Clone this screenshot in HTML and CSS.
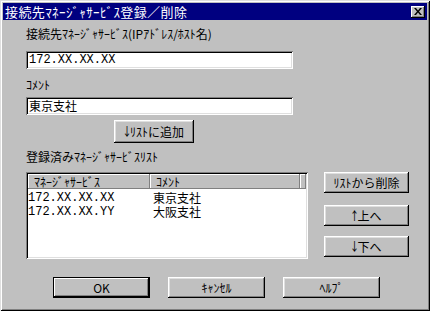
FILE: index.html
```html
<!DOCTYPE html>
<html lang="ja">
<head>
    <meta charset="UTF-8">
    <title>接続先ﾏﾈｰｼﾞｬｻｰﾋﾞｽ登録／削除</title>
    <link rel="stylesheet" href="styles.css">
</head>
<body>
    <div class="dialog">
        <div class="titlebar">
            <span class="title">接続先ﾏﾈｰｼﾞｬｻｰﾋﾞｽ登録／削除</span>
            <span class="close-btn">
                <svg width="8" height="7" viewBox="0 0 8 7">
                    <path d="M0 0 L2 0 L4 2.5 L6 0 L8 0 L5 3.5 L8 7 L6 7 L4 4.5 L2 7 L0 7 L3 3.5 Z" fill="#000"/>
                </svg>
            </span>
        </div>

        <div class="content">
            <div class="label first">接続先ﾏﾈｰｼﾞｬｻｰﾋﾞｽ(IPｱﾄﾞﾚｽ/ﾎｽﾄ名)</div>
            <div class="field mono">172.XX.XX.XX</div>

            <div class="label comment-label">ｺﾒﾝﾄ</div>
            <div class="field field-comment">東京支社</div>

            <div class="btn btn-add">￬ﾘｽﾄに追加</div>

            <div class="label list-label">登録済みﾏﾈｰｼﾞｬｻｰﾋﾞｽﾘｽﾄ</div>

            <div class="list-area">
                <div class="listbox">
                    <div class="list-head">
                        <div class="head-cell">ﾏﾈｰｼﾞｬｻｰﾋﾞｽ</div>
                        <div class="head-cell">ｺﾒﾝﾄ</div>
                        <div class="head-cell"></div>
                    </div>
                    <div class="list-row">
                        <span class="mono">172.XX.XX.XX</span>
                        <span>東京支社</span>
                    </div>
                    <div class="list-row">
                        <span class="mono">172.XX.XX.YY</span>
                        <span>大阪支社</span>
                    </div>
                </div>
                <div class="side-buttons">
                    <div class="btn">ﾘｽﾄから削除</div>
                    <div class="btn">￪上へ</div>
                    <div class="btn">￬下へ</div>
                </div>
            </div>

            <div class="footer">
                <div class="btn btn-default">OK</div>
                <div class="btn">ｷｬﾝｾﾙ</div>
                <div class="btn">ﾍﾙﾌﾟ</div>
            </div>
        </div>
    </div>
</body>
</html>
```

FILE: styles.css
```css
body {
    margin: 0;
    background-color: #fff;
    font-family: "Noto Sans CJK JP", sans-serif;
    font-size: 12px;
    color: #000;
}

.dialog {
    width: 430px;
    height: 311px;
    box-sizing: border-box;
    background-color: #c0c0c0;
    box-shadow: inset 1px 1px #dfdfdf, inset -1px -1px #000,
                inset 2px 2px #fff, inset -2px -2px #808080;
    overflow: hidden;
}

.titlebar {
    margin: 3px 3px 0 3px;
    height: 17px;
    background-color: #000080;
    color: #fff;
    display: flex;
    align-items: center;
    justify-content: space-between;
}

.title {
    padding-left: 2px;
    font-size: 13px;
    letter-spacing: 0.4px;
    line-height: 17px;
}

.close-btn {
    width: 14px;
    height: 12px;
    margin-right: 2px;
    background-color: #c0c0c0;
    box-shadow: inset -1px -1px #000, inset 1px 1px #fff, inset -2px -2px #808080;
    display: flex;
    align-items: center;
    justify-content: center;
}

.content {
    padding-left: 26px;
}

.label {
    line-height: 14px;
    height: 14px;
}

.first {
    margin-top: 7px;
}

.comment-label {
    margin-top: 9px;
}

.list-label {
    margin-top: 7px;
}

.mono {
    font-family: "Liberation Mono", "Noto Sans CJK JP", monospace;
}

.field {
    width: 267px;
    height: 18px;
    line-height: 18px;
    margin-top: 10px;
    padding-left: 3px;
    box-sizing: border-box;
    background-color: #fff;
    box-shadow: inset 1px 1px #808080, inset -1px -1px #fff,
                inset 2px 2px #000, inset -2px -2px #dfdfdf;
}

.field-comment {
    margin-top: 5px;
}

.btn {
    height: 21px;
    line-height: 21px;
    text-align: center;
    background-color: #c0c0c0;
    box-sizing: border-box;
    box-shadow: inset -1px -1px #000, inset 1px 1px #fff,
                inset -2px -2px #808080, inset 2px 2px #dfdfdf;
}

.btn-add {
    width: 80px;
    height: 23px;
    line-height: 23px;
    margin: 5px 0 0 88px;
}

.list-area {
    display: flex;
    margin-top: 8px;
}

.listbox {
    width: 282px;
    height: 87px;
    padding: 2px;
    box-sizing: border-box;
    background-color: #fff;
    box-shadow: inset 1px 1px #808080, inset -1px -1px #fff,
                inset 2px 2px #000, inset -2px -2px #dfdfdf;
}

.list-head {
    display: grid;
    grid-template-columns: 122px 150px 1fr;
    height: 15px;
}

.head-cell {
    background-color: #c0c0c0;
    line-height: 15px;
    padding-left: 6px;
    box-shadow: inset -1px -1px #808080, inset 1px 1px #fff;
}

.list-row {
    display: grid;
    grid-template-columns: 125px 1fr;
    height: 14px;
    line-height: 14px;
}

.list-head + .list-row {
    margin-top: 2px;
}

.side-buttons {
    width: 85px;
    margin-left: 16px;
    display: flex;
    flex-direction: column;
    gap: 12px;
}

.side-buttons .btn:last-child {
    margin-top: -2px;
}

.footer {
    display: flex;
    gap: 18px;
    margin: 18px 0 0 27px;
}

.footer .btn {
    width: 97px;
}

.btn-default {
    box-shadow: inset 0 0 0 1px #000, inset -2px -2px #000, inset 2px 2px #fff,
                inset -3px -3px #808080;
}
```
